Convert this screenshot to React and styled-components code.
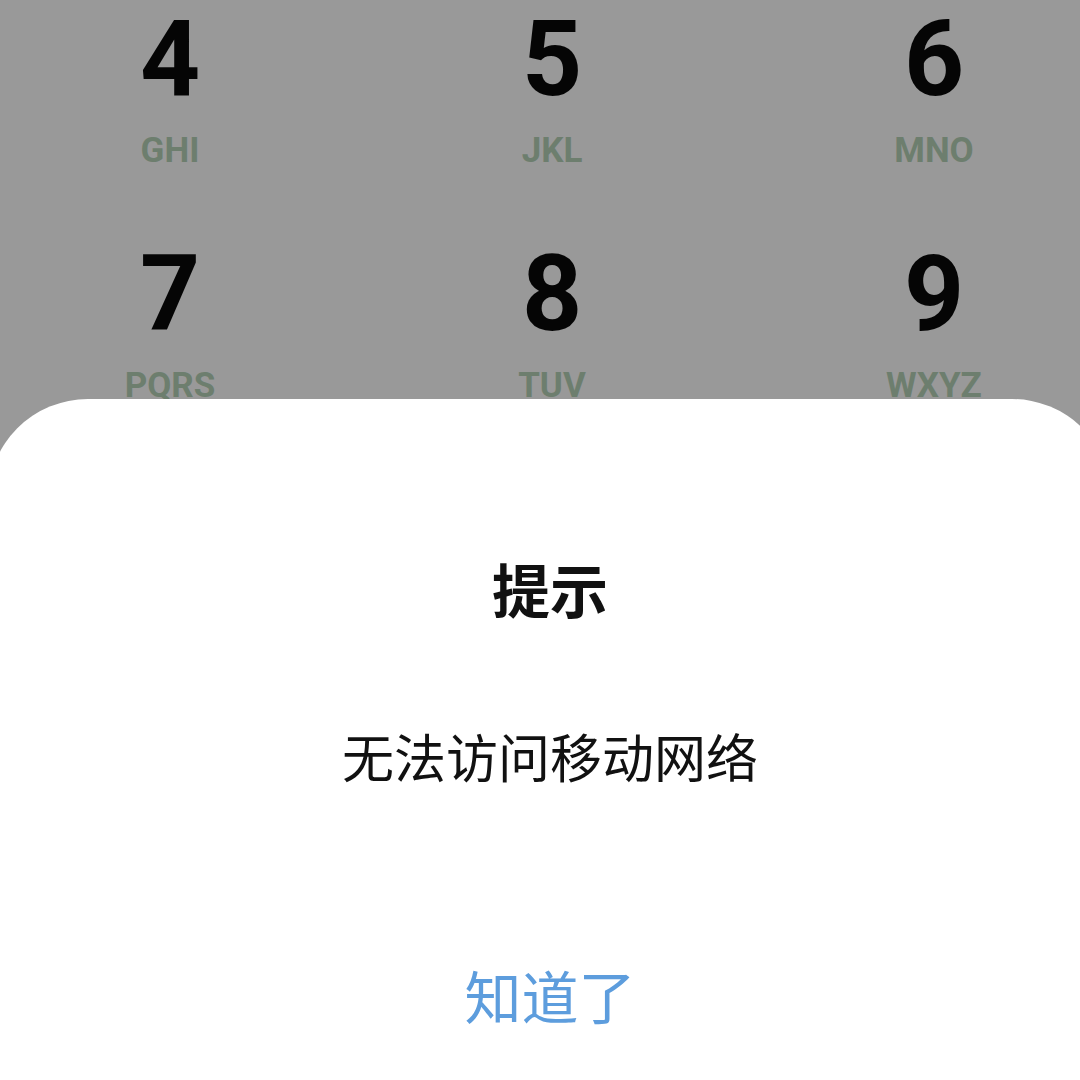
import React from 'react';
import styled, { createGlobalStyle } from 'styled-components';

const GlobalStyle = createGlobalStyle`
  html, body {
    margin: 0;
    padding: 0;
    background: #999999;
    overflow: hidden;
  }
`;

const Screen = styled.div`
  position: relative;
  width: 1080px;
  height: 1080px;
  overflow: hidden;
  background: #999999;
`;

const Keypad = styled.div`
  display: grid;
  grid-template-columns: repeat(3, 382px);
  grid-auto-rows: 235px;
  margin-left: -21px;
  padding-top: 7px;
`;

const Key = styled.div`
  display: flex;
  flex-direction: column;
  align-items: center;
`;

const Digit = styled.span`
  font-family: Roboto, "Liberation Sans", sans-serif;
  font-weight: 700;
  font-size: 105px;
  line-height: 1;
  color: #050505;
`;

const Letters = styled.span`
  margin-top: 21px;
  font-family: Roboto, "Liberation Sans", sans-serif;
  font-weight: 700;
  font-size: 35px;
  line-height: 1;
  color: #6d7e6e;
`;

// bottom sheet laid over the keypad
const Sheet = styled.div`
  position: absolute;
  top: 399px;
  left: -12px;
  right: -32px;
  bottom: -100px;
  background: #ffffff;
  border-radius: 100px 100px 0 0;
  display: flex;
  flex-direction: column;
  align-items: center;
  padding-top: 160px;
  font-family: "Noto Sans CJK SC", "Noto Sans", sans-serif;
`;

const Title = styled.div`
  font-size: 58px;
  font-weight: 700;
  line-height: 1;
  color: #111111;
`;

const Message = styled.div`
  margin-top: 113px;
  font-size: 52px;
  font-weight: 400;
  line-height: 1;
  color: #111111;
`;

const ConfirmButton = styled.button`
  margin-top: 184px;
  padding: 0;
  border: none;
  background: none;
  font-family: inherit;
  font-size: 57px;
  font-weight: 400;
  line-height: 1;
  color: #5d9ddd;
  cursor: pointer;
`;

const keys = [
  ['4', 'GHI'],
  ['5', 'JKL'],
  ['6', 'MNO'],
  ['7', 'PQRS'],
  ['8', 'TUV'],
  ['9', 'WXYZ'],
];

export default function App() {
  return (
    <>
      <GlobalStyle />
      <Screen>
        <Keypad>
          {keys.map(([d, l]) => (
            <Key key={d}>
              <Digit>{d}</Digit>
              <Letters>{l}</Letters>
            </Key>
          ))}
        </Keypad>
        <Sheet>
          <Title>提示</Title>
          <Message>无法访问移动网络</Message>
          <ConfirmButton>知道了</ConfirmButton>
        </Sheet>
      </Screen>
    </>
  );
}
